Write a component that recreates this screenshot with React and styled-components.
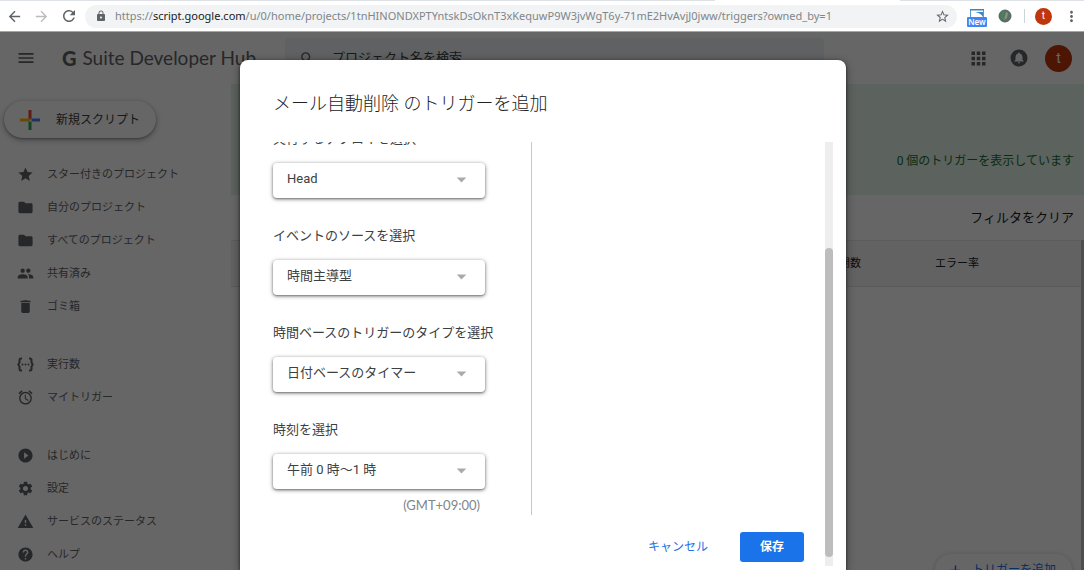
import React from "react";
import styled, { createGlobalStyle } from "styled-components";
import {
  MdMenu, MdStar, MdFolder, MdPeople, MdDelete, MdAlarm, MdPlayCircleFilled,
  MdSettings, MdWarning, MdHelp, MdApps, MdSearch, MdArrowBack, MdArrowForward,
  MdRefresh, MdLock, MdStarBorder, MdMoreVert, MdArrowDropDown, MdAdd,
} from "react-icons/md";

const GlobalStyle = createGlobalStyle`
  *, *::before, *::after { box-sizing: border-box; }
  body {
    margin: 0;
    background: #fff;
    color: #202124;
    font-family: Roboto, "Noto Sans CJK JP", sans-serif;
    font-size: 12px;
    line-height: 20px;
  }
  button, input, select { font: inherit; color: inherit; margin: 0; }
  button { border: 0; padding: 0; background: none; cursor: pointer; }
  a { color: inherit; text-decoration: none; }
`;

const Shell = styled.div`
  display: flex;
  flex-direction: column;
  height: 100vh;
  overflow: hidden;
`;

/* ---- browser chrome ---- */
const TabEdge = styled.div`
  display: flex;
  justify-content: space-between;
  height: 1px;
  flex: none;
  &::before, &::after { content: ""; background: #dee1e6; }
  &::before { width: 66%; }
  &::after { width: 17%; }
`;

const BrowserBar = styled.div`
  display: flex;
  align-items: center;
  flex: none;
  height: 31px;
  padding-left: 6px;
  border-bottom: 1px solid #a5a5a5;
  color: #5f6368;
`;

const ChromeButton = styled.button`
  display: grid;
  place-items: center;
  flex: none;
  width: ${(p) => p.$w || 26}px;
  height: 22px;
  color: ${(p) => (p.$dim ? "#babcbe" : "#5f6368")};
`;

const AddressBar = styled.div`
  display: flex;
  align-items: center;
  flex: 1;
  min-width: 0;
  height: 23px;
  margin: 0 9px 0 6px;
  padding: 0 3px 0 10px;
  border-radius: 12px;
  background: #f1f3f4;
`;

const Url = styled.div`
  flex: 1;
  min-width: 0;
  margin-left: 8px;
  overflow: hidden;
  white-space: nowrap;
  font-family: "Noto Sans", sans-serif;
  font-size: 11px;
  font-weight: 400;
  color: #80868b;
  b { font-weight: 400; color: #202124; }
`;

const ChromeRule = styled.span`
  width: 1px;
  height: 14px;
  margin: 0 10px 0 2px;
  background: #d0d3d7;
`;

const Avatar = styled.button`
  display: grid;
  place-items: center;
  flex: none;
  width: ${(p) => p.$size}px;
  height: ${(p) => p.$size}px;
  border-radius: 50%;
  background: #bf360c;
  color: #fff;
  font-size: ${(p) => (p.$size > 20 ? 14 : 10)}px;
  line-height: 1;
`;

const ProfileSlot = styled.span`
  display: flex;
  margin-right: 6px;
`;

/* ---- page behind the dialog ---- */
const Page = styled.div`
  position: relative;
  display: flex;
  flex-direction: column;
  flex: 1;
  min-height: 0;
  overflow: hidden;
`;

const Header = styled.header`
  display: flex;
  align-items: center;
  flex: none;
  height: 52px;
  padding: 0 12px 0 16px;
  color: #5f6368;
`;

const IconButton = styled.button`
  display: grid;
  place-items: center;
  flex: none;
  width: ${(p) => p.$w || 20}px;
  height: 28px;
  color: #5f6368;
`;

const Logo = styled.a`
  display: flex;
  gap: 6px;
  flex: none;
  width: 222px;
  padding-left: 26px;
  font-family: Lato, sans-serif;
  font-size: 19px;
  line-height: 28px;
  white-space: nowrap;
  b { font-size: 20px; font-weight: 900; }
`;

const Search = styled.label`
  display: flex;
  align-items: center;
  flex: 1;
  height: 40px;
  margin: 0 140px 0 27px;
  padding: 0 14px;
  gap: 16px;
  border-radius: 4px;
  background: #f1f3f4;
  input {
    flex: 1;
    min-width: 0;
    border: 0;
    padding: 0;
    background: none;
    outline: 0;
    font-size: 13px;
  }
  input::placeholder { color: #3c4043; opacity: 1; }
`;

const Columns = styled.div`
  display: flex;
  flex: 1;
  min-height: 0;
`;

const Sidebar = styled.aside`
  flex: none;
  width: 231px;
  padding: 17px 4px 0;
`;

const NewScript = styled.button`
  display: flex;
  align-items: center;
  gap: 15px;
  height: 37px;
  padding: 0 16px 0 15px;
  border-radius: 19px;
  background: #fff;
  color: #3c4043;
  box-shadow: 0 1px 2px rgba(60, 64, 67, .4), 0 2px 5px 1px rgba(60, 64, 67, .3);
`;

const NavGroup = styled.ul`
  list-style: none;
  margin: 0 0 25px;
  padding: 0;
  &:first-of-type { margin-top: 20px; }
`;

const NavLink = styled.a`
  display: flex;
  align-items: center;
  gap: 13px;
  height: 33px;
  padding-left: 13px;
  color: #5f6368;
  font-size: 11px;
  svg { flex: none; }
`;

const Main = styled.main`
  display: flex;
  flex-direction: column;
  flex: 1;
  min-width: 0;
`;

const Banner = styled.section`
  display: flex;
  align-items: flex-end;
  justify-content: flex-end;
  height: 111px;
  padding: 0 10px 24px;
  background: #e6f4ea;
  color: #137333;
`;

const Toolbar = styled.div`
  display: flex;
  align-items: center;
  justify-content: flex-end;
  height: 45px;
  padding: 0 10px;
  button { font-size: 13px; }
`;

const TableArea = styled.div`
  flex: 1;
  border-right: 3px solid #c4c4c4;
`;

const Table = styled.table`
  width: 100%;
  border-collapse: collapse;
`;

const Th = styled.th`
  width: ${(p) => (p.$w ? `${p.$w}px` : "auto")};
  height: 46px;
  padding: 0;
  border: solid #e4e4e4;
  border-width: 1px 0;
  background: #f5f5f5;
  font-size: 11px;
  font-weight: 400;
  text-align: left;
`;

const AddTrigger = styled.button`
  position: absolute;
  right: 12px;
  bottom: -16px;
  display: flex;
  align-items: center;
  gap: 8px;
  height: 32px;
  padding: 0 16px 0 12px;
  border-radius: 16px;
  background: #fff;
  color: #1a73e8;
  box-shadow: 0 1px 4px 1px rgba(60, 64, 67, .2);
`;

/* ---- dialog ---- */
const Scrim = styled.div`
  position: absolute;
  inset: 0;
  display: flex;
  justify-content: center;
  padding: 28px 0 0 2px;
  background: rgba(0, 0, 0, .6);
`;

const Dialog = styled.form`
  display: flex;
  flex-direction: column;
  width: 606px;
  max-width: 100%;
  padding-left: 27px;
  border-radius: 8px 8px 0 0;
  background: #fff;
  color: #3c4043;
  box-shadow: 0 1px 3px rgba(0, 0, 0, .6), 0 2px 10px rgba(0, 0, 0, .4);
`;

const Title = styled.h1`
  flex: none;
  margin: 0;
  padding: 30px 6px 24px;
  color: #202124;
  font-size: 18px;
  line-height: 28px;
  font-weight: 300;
`;

const ScrollArea = styled.div`
  display: flex;
  flex: 1;
  min-height: 0;
`;

const Content = styled.div`
  display: flex;
  flex-direction: column;
  flex: 1;
  min-width: 0;
`;

const Fields = styled.div`
  display: flex;
  flex-direction: column;
  justify-content: flex-end;
  gap: 28px;
  flex: 1;
  min-height: 0;
  width: 265px;
  padding-left: 6px;
  overflow: hidden;
  border-right: 1px solid #c8c8c8;
`;

const Field = styled.div`
  display: flex;
  flex-direction: column;
  flex: none;
  label {
    margin-bottom: 14px;
    font-size: 13px;
    white-space: nowrap;
  }
`;

const SelectBox = styled.div`
  display: grid;
  align-items: center;
  width: 212px;
  height: 35px;
  border-radius: 4px;
  background: #fff;
  box-shadow: 0 1px 4px rgba(60, 64, 67, .6), 0 1px 2px rgba(60, 64, 67, .45);
  select, svg { grid-area: 1 / 1; }
  select {
    appearance: none;
    width: 100%;
    height: 35px;
    padding: 0 40px 3px 14px;
    border: 0;
    border-radius: 4px;
    background: none;
    font-size: 13px;
  }
  svg { justify-self: end; margin: 0 12px 2px 0; pointer-events: none; color: #aaa; }
`;

const Zone = styled.small`
  width: 212px;
  margin-top: 6px;
  padding-right: 5px;
  color: #80868b;
  font-family: Lato, sans-serif;
  font-size: 13px;
  text-align: right;
`;

const Footer = styled.div`
  display: flex;
  align-items: center;
  justify-content: flex-end;
  gap: 16px;
  flex: none;
  height: 55px;
  padding: 8px 21px 0 0;
`;

const Action = styled.button`
  height: 30px;
  padding: 0 ${(p) => (p.$primary ? 20 : 16)}px;
  border-radius: 3px;
  background: ${(p) => (p.$primary ? "#1a73e8" : "transparent")};
  color: ${(p) => (p.$primary ? "#fff" : "#1a73e8")};
  font-weight: ${(p) => (p.$primary ? 700 : 400)};
`;

const Track = styled.div`
  display: flex;
  flex-direction: column;
  justify-content: flex-end;
  width: 8px;
  margin: 0 13px 4px 0;
  padding-bottom: 9px;
  background: #eee;
  &::after {
    content: "";
    height: 74.5%;
    border-radius: 4px;
    background: #bdbdbd;
  }
`;

const PlusMark = () => (
  <svg width="22" height="22" viewBox="0 0 22 22" aria-hidden="true">
    <path fill="#ea4335" d="M9.500 1h3v8.500l-3 3z" />
    <path fill="#4285f4" d="M12.500 9.500H21v3h-8.500z" />
    <path fill="#34a853" d="M9.500 12.500h3V21h-3z" />
    <path fill="#fbbc04" d="M1 9.500h11.500l-3 3H1z" />
  </svg>
);

const ExecutionsIcon = () => (
  <svg width="17" height="17" viewBox="0 0 17 17" aria-hidden="true">
    <path d="M5 2.500H4Q2.500 2.500 2.500 4v2.500L1.300 8.500l1.200 2V13q0 1.500 1.500 1.500h1M12 2.500h1q1.500 0 1.500 1.500v2.500l1.200 2-1.200 2V13q0 1.500-1.500 1.500h-1" fill="none" stroke="currentColor" strokeWidth="2" />
    <circle cx="5.500" cy="8.500" r="1" fill="currentColor" />
    <circle cx="8.500" cy="8.500" r="1" fill="currentColor" />
    <circle cx="11.500" cy="8.500" r="1" fill="currentColor" />
  </svg>
);

const BellIcon = () => (
  <svg width="18" height="18" viewBox="0 0 18 18" aria-hidden="true">
    <circle cx="9" cy="9" r="8.500" fill="currentColor" />
    <path d="M9 3.500q.9 0 .9.900Q12.500 5.200 12.500 8v2.700l1.200 1.200v.6H4.300v-.6l1.200-1.200V8q0-2.800 2.600-3.600 0-.9.900-.9zM7.800 13.200h2.400Q10 14.500 9 14.500t-1.200-1.300z" fill="#fff" />
  </svg>
);

const NewExtension = () => (
  <svg width="22" height="22" viewBox="0 0 22 22" role="img" aria-label="New">
    <path d="M4.500 4.500h13v9h-13z" fill="#fff" stroke="#5a9acb" />
    <path d="M4 4h14v1.500H4z" fill="#3b86c0" />
    <path d="M9 7h8v5q-2-4-8-5z" fill="#3b86c0" />
    <rect x="1" y="12" width="20" height="10" rx="1" fill="#4285f4" />
    <text x="11" y="20" textAnchor="middle" fontFamily="Noto Sans, sans-serif" fontSize="8" fontWeight="600" fill="#fff">New</text>
  </svg>
);

const GlobeExtension = () => (
  <svg width="14" height="14" viewBox="0 0 14 14" aria-hidden="true">
    <circle cx="7" cy="7" r="6" fill="#59705f" stroke="#566069" />
    <path d="M3 4q2-3 4-2L5 7l1 4Q2 9 3 4z" fill="#3f8a4c" />
    <path d="M8 3l2 1-1 5-3 2z" fill="#8a8f8e" />
  </svg>
);

const NAV = [
  [[MdStar, "スター付きのプロジェクト"], [MdFolder, "自分のプロジェクト"], [MdFolder, "すべてのプロジェクト"], [MdPeople, "共有済み"], [MdDelete, "ゴミ箱"]],
  [[ExecutionsIcon, "実行数"], [MdAlarm, "マイトリガー"]],
  [[MdPlayCircleFilled, "はじめに"], [MdSettings, "設定"], [MdWarning, "サービスのステータス"], [MdHelp, "ヘルプ"]],
];

const FIELDS = [
  ["deployment", "実行するデプロイを選択", "Head"],
  ["source", "イベントのソースを選択", "時間主導型"],
  ["type", "時間ベースのトリガーのタイプを選択", "日付ベースのタイマー"],
  ["time", "時刻を選択", "午前 0 時～1 時"],
];

export default function App() {
  return (
    <Shell>
      <GlobalStyle />
      <TabEdge />
      <BrowserBar>
        <ChromeButton aria-label="戻る" $w={17}><MdArrowBack size={17} /></ChromeButton>
        <ChromeButton aria-label="進む" $dim $w={36}><MdArrowForward size={17} /></ChromeButton>
        <ChromeButton aria-label="再読み込み" $w={20}><MdRefresh size={18} /></ChromeButton>
        <AddressBar>
          <MdLock size={12} />
          <Url>https://<b>script.google.com</b>/u/0/home/projects/1tnHINONDXPTYntskDsOknT3xKequwP9W3jvWgT6y-71mE2HvAvjJ0jww/triggers?owned_by=1</Url>
          <ChromeButton aria-label="ブックマーク" $w={24}><MdStarBorder size={15} /></ChromeButton>
        </AddressBar>
        <NewExtension />
        <ChromeButton aria-label="拡張機能" $w={34}><GlobeExtension /></ChromeButton>
        <ChromeRule />
        <ProfileSlot><Avatar $size={17} aria-label="プロフィール">t</Avatar></ProfileSlot>
        <ChromeButton aria-label="メニュー"><MdMoreVert size={17} /></ChromeButton>
      </BrowserBar>
      <Page>
        <Header>
          <IconButton aria-label="メニュー"><MdMenu size={20} /></IconButton>
          <Logo href="#"><b>G</b>Suite Developer Hub</Logo>
          <Search>
            <MdSearch size={17} />
            <input type="search" placeholder="プロジェクト名を検索" />
          </Search>
          <IconButton aria-label="アプリ" $w={28}><MdApps size={21} /></IconButton>
          <IconButton aria-label="通知" $w={53}><BellIcon /></IconButton>
          <Avatar $size={27} aria-label="アカウント">t</Avatar>
        </Header>
        <Columns>
          <Sidebar>
            <NewScript><PlusMark />新規スクリプト</NewScript>
            <nav>
              {NAV.map((group, i) => (
                <NavGroup key={i}>
                  {group.map(([Icon, text]) => (
                    <li key={text}><NavLink href="#"><Icon size={17} />{text}</NavLink></li>
                  ))}
                </NavGroup>
              ))}
            </nav>
          </Sidebar>
          <Main>
            <Banner>0 個のトリガーを表示しています</Banner>
            <Toolbar><button>フィルタをクリア</button></Toolbar>
            <TableArea>
              <Table>
                <thead>
                  <tr><Th /><Th $w={96}>関数</Th><Th $w={146}>エラー率</Th></tr>
                </thead>
              </Table>
            </TableArea>
          </Main>
        </Columns>
        <AddTrigger><MdAdd size={17} />トリガーを追加</AddTrigger>
        <Scrim>
          <Dialog role="dialog" aria-labelledby="dialog-title">
            <Title id="dialog-title">メール自動削除 のトリガーを追加</Title>
            <ScrollArea>
              <Content>
                <Fields>
                  {FIELDS.map(([id, label, value]) => (
                    <Field key={id}>
                      <label htmlFor={id}>{label}</label>
                      <SelectBox>
                        <select id={id}><option>{value}</option></select>
                        <MdArrowDropDown size={23} />
                      </SelectBox>
                      {id === "time" && <Zone>(GMT+09:00)</Zone>}
                    </Field>
                  ))}
                </Fields>
                <Footer>
                  <Action type="button">キャンセル</Action>
                  <Action type="button" $primary>保存</Action>
                </Footer>
              </Content>
              <Track />
            </ScrollArea>
          </Dialog>
        </Scrim>
      </Page>
    </Shell>
  );
}
